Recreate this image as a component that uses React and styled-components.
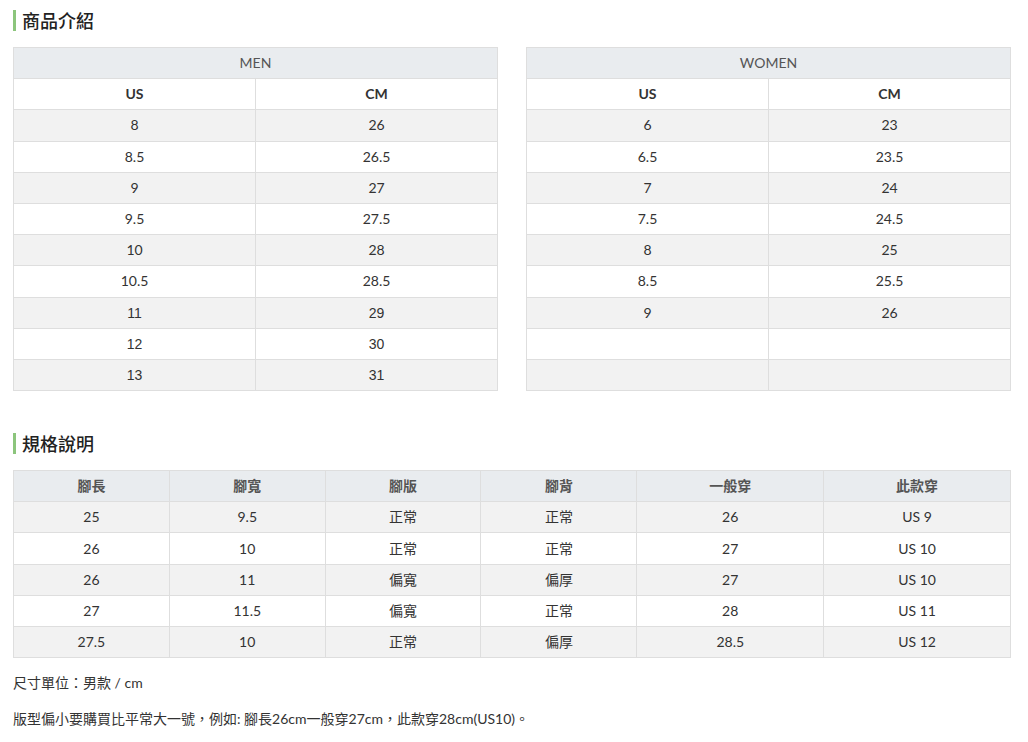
import React from "react";
import styled, { createGlobalStyle } from "styled-components";

const Global = createGlobalStyle`
  html, body { margin: 0; padding: 0; background: #fff; }
  body { font-family: Lato, "Noto Sans CJK TC", sans-serif; color: #333; }
`;

const Page = styled.div`
  width: 998px;
  padding: 10px 0 0 13px;
  display: flex;
  flex-direction: column;
`;

const Title = styled.h2`
  margin: 0;
  height: 21px;
  display: flex;
  align-items: center;
  border-left: 3px solid #8cc57c;
  padding-left: 6px;
  font-family: "Noto Sans CJK TC", sans-serif;
  font-size: 18px;
  font-weight: 500;
  color: #222;
  line-height: 21px;
  margin-top: ${(p) => p.$top || 0}px;
`;

const TablesRow = styled.div`
  display: flex;
  gap: 28px;
  margin-top: 16px;
`;

const Table = styled.table`
  border-collapse: collapse;
  width: ${(p) => p.$width || "100%"};
  table-layout: fixed;
  font-size: 14px;
  margin-top: ${(p) => p.$top || 0}px;
`;

const Cell = styled.td`
  border: 1px solid #dedede;
  text-align: center;
  padding: 5.1px 8px;
  line-height: 20px;
  height: 20px;
  font-weight: ${(p) => (p.$bold ? 700 : 400)};
  font-family: ${(p) =>
    p.$arial ? '"Liberation Sans", Arial, sans-serif' : 'Lato, "Noto Sans CJK TC", sans-serif'};
  background: ${(p) => (p.$head ? "#e9ecef" : "transparent")};
  color: ${(p) => (p.$head ? "#555" : "#333")};
`;

const Row = styled.tr`
  background: ${(p) => (p.$stripe ? "#f2f2f2" : "#fff")};
`;

const Note = styled.p`
  margin: ${(p) => p.$top}px 0 0;
  font-size: 14px;
  line-height: 20px;
  color: #333;
`;

const men = [
  ["8", "26"], ["8.5", "26.5"], ["9", "27"], ["9.5", "27.5"], ["10", "28"],
  ["10.5", "28.5"], ["11", "29", true], ["12", "30", true], ["13", "31", true],
];
const women = [
  ["6", "23"], ["6.5", "23.5"], ["7", "24"], ["7.5", "24.5"], ["8", "25"],
  ["8.5", "25.5"], ["9", "26"], ["", ""], ["", ""],
];
const spec = [
  ["25", "9.5", "正常", "正常", "26", "US 9"],
  ["26", "10", "正常", "正常", "27", "US 10"],
  ["26", "11", "偏寬", "偏厚", "27", "US 10"],
  ["27", "11.5", "偏寬", "正常", "28", "US 11"],
  ["27.5", "10", "正常", "偏厚", "28.5", "US 12"],
];
const specHead = ["腳長", "腳寬", "腳版", "腳背", "一般穿", "此款穿"];
const specWidths = ["15.63%", "15.63%", "15.63%", "15.63%", "18.74%", "18.74%"];

function SizeTable({ label, rows }) {
  return (
    <Table $width="485px">
      <tbody>
        <tr>
          <Cell as="th" colSpan={2} $head>{label}</Cell>
        </tr>
        <Row>
          <Cell as="th" $bold>US</Cell>
          <Cell as="th" $bold>CM</Cell>
        </Row>
        {rows.map(([a, b, arial], i) => (
          <Row key={i} $stripe={i % 2 === 0}>
            <Cell $arial={arial}>{a}</Cell>
            <Cell $arial={arial}>{b}</Cell>
          </Row>
        ))}
      </tbody>
    </Table>
  );
}

export default function App() {
  return (
    <>
      <Global />
      <Page>
        <Title>商品介紹</Title>
        <TablesRow>
          <SizeTable label="MEN" rows={men} />
          <SizeTable label="WOMEN" rows={women} />
        </TablesRow>
        <Title $top={42}>規格說明</Title>
        <Table $top={16}>
          <colgroup>
            {specWidths.map((w, i) => (
              <col key={i} style={{ width: w }} />
            ))}
          </colgroup>
          <tbody>
            <tr>
              {specHead.map((h) => (
                <Cell as="th" key={h} $head $bold>{h}</Cell>
              ))}
            </tr>
            {spec.map((r, i) => (
              <Row key={i} $stripe={i % 2 === 0}>
                {r.map((c, j) => (
                  <Cell key={j}>{c}</Cell>
                ))}
              </Row>
            ))}
          </tbody>
        </Table>
        <Note $top={15}>尺寸單位：男款 / cm</Note>
        <Note $top={16}>版型偏小要購買比平常大一號，例如: 腳長26cm一般穿27cm，此款穿28cm(US10)。</Note>
      </Page>
    </>
  );
}
